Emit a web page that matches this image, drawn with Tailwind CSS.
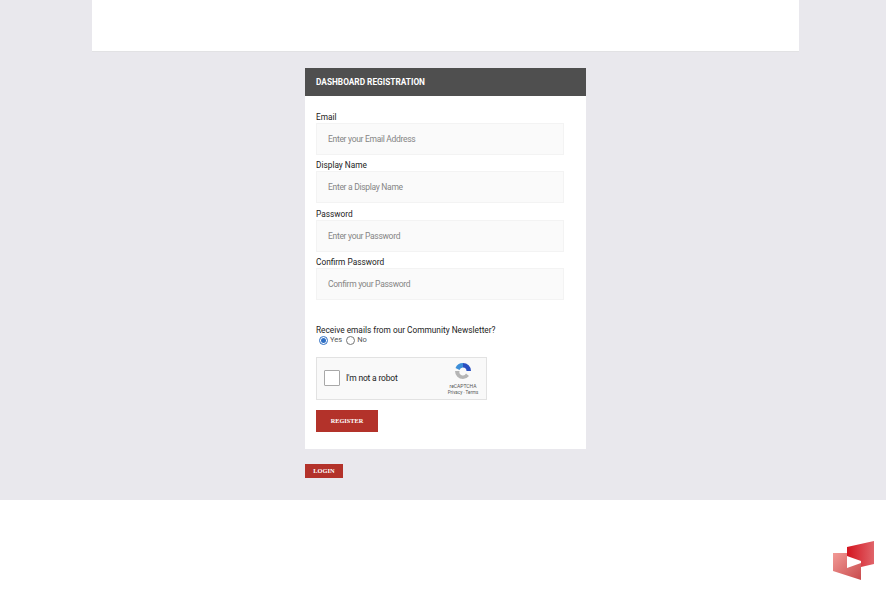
<!DOCTYPE html>
<html>
<head>
<title>Dashboard Registration</title>
<script src="https://cdn.jsdelivr.net/npm/@tailwindcss/browser@4"></script>
</head>
<body class="w-[886px] h-[600px] overflow-hidden bg-white font-['Roboto',sans-serif] relative">
  <div class="h-[500px] bg-[#e9e8ed]">
    <div class="ml-[92px] w-[707px] h-[52px] bg-white border-b border-[#e2e2e4]"></div>
    <div class="ml-[305px] mt-[16px] w-[281px]">
      <form class="bg-white h-[381px]">
        <h1 class="h-[28px] bg-[#4f4f4f] text-white font-bold text-[8.3px] leading-[28px] pl-[11px] uppercase">Dashboard Registration</h1>
        <div class="pl-[11px] pt-[16px]">
          <label class="block text-[8.3px] leading-[11px] text-[#222] h-[11px]">Email</label>
          <div class="w-[248px] h-[32px] bg-[#fafafa] border border-[#f3f3f3] text-[8.5px] tracking-[-0.3px] leading-[30px] pl-[11px] text-[#858585]">Enter your Email Address</div>
          <label class="block mt-[5.33px] text-[8.3px] leading-[11px] text-[#222] h-[11px]">Display Name</label>
          <div class="w-[248px] h-[32px] bg-[#fafafa] border border-[#f3f3f3] text-[8.5px] tracking-[-0.3px] leading-[30px] pl-[11px] text-[#858585]">Enter a Display Name</div>
          <label class="block mt-[5.33px] text-[8.3px] leading-[11px] text-[#222] h-[11px]">Password</label>
          <div class="w-[248px] h-[32px] bg-[#fafafa] border border-[#f3f3f3] text-[8.5px] tracking-[-0.3px] leading-[30px] pl-[11px] text-[#858585]">Enter your Password</div>
          <label class="block mt-[5.33px] text-[8.3px] leading-[11px] text-[#222] h-[11px]">Confirm Password</label>
          <div class="w-[248px] h-[32px] bg-[#fafafa] border border-[#f3f3f3] text-[8.5px] tracking-[-0.3px] leading-[30px] pl-[11px] text-[#858585]">Confirm your Password</div>
          <p class="mt-[25px] text-[8.3px] leading-[11px] text-[#222]">Receive emails from our Community Newsletter?</p>
          <div class="-mt-[1px] flex items-center pl-[3px] h-[12px] text-[7.5px] text-[#555]">
            <span class="w-[9px] h-[9px] rounded-full border border-[#2f6fc4] flex items-center justify-center"><span class="w-[5px] h-[5px] rounded-full bg-[#2f6fc4]"></span></span>
            <span class="ml-[2px] -mt-[2px]">Yes</span>
            <span class="ml-[4px] w-[9px] h-[9px] rounded-full border border-[#777]"></span>
            <span class="ml-[2px] -mt-[2px]">No</span>
          </div>
          <div class="mt-[10px] w-[171px] h-[43px] bg-[#f9f9f9] border border-[#e2e2e2] flex items-center relative">
            <span class="ml-[7px] w-[16px] h-[16px] bg-white border border-[#a8a8a8] rounded-[1px]"></span>
            <span class="ml-[6px] text-[8.5px] tracking-[-0.2px] text-[#222]">I'm not a robot</span>
            <div class="absolute right-[6px] top-[4px] w-[34px] flex flex-col items-center text-[5px] leading-[7px] text-[#555]">
              <svg width="18" height="18" viewBox="0 0 18 18" fill="none">
                <path d="M9 1 A8 8 0 0 1 17 9 L12.5 9 A3.5 3.5 0 0 0 9 5.5Z" fill="#2a4fc0"/>
                <path d="M9 1 A8 8 0 0 0 1.5 6 L5.5 8 A3.5 3.5 0 0 1 9 5.5Z" fill="#3d8fd8"/>
                <path d="M1 9 A8 8 0 0 0 9 17 A8 8 0 0 0 15 14 L12 11.5 A3.5 3.5 0 0 1 5.5 9Z" fill="#b5b5b5"/>
              </svg>
              <span class="mt-[3px]">reCAPTCHA</span>
              <span class="text-[4.5px] leading-[6px] whitespace-nowrap">Privacy · Terms</span>
            </div>
          </div>
          <button type="button" class="block mt-[10px] w-[62px] h-[22px] bg-[#b3322a] text-white font-['Liberation_Serif',serif] font-bold text-[6.3px] uppercase">Register</button>
        </div>
      </form>
      <button type="button" class="block mt-[15px] w-[38px] h-[14px] bg-[#b3322a] text-white font-['Liberation_Serif',serif] font-bold text-[6.4px] uppercase">Login</button>
    </div>
  </div>
  <svg class="absolute left-[833px] top-[541px]" width="42" height="39" viewBox="0 0 42 39">
    <defs>
      <linearGradient id="top" x1="0" y1="0" x2="1" y2="0"><stop offset="0" stop-color="#d4141f"/><stop offset="1" stop-color="#e0646a"/></linearGradient>
      <linearGradient id="low" x1="0" y1="0" x2="1" y2="1"><stop offset="0" stop-color="#f29a96"/><stop offset="1" stop-color="#c84a4c"/></linearGradient>
    </defs>
    <path d="M14 6 L41 0 L41 23 L28 26 L28 20 L14 15Z" fill="url(#top)"/>
    <path d="M0 12 L14 12 L14 27 L28 22 L28 39 L0 30Z" fill="url(#low)"/>
  </svg>
</body>
</html>
